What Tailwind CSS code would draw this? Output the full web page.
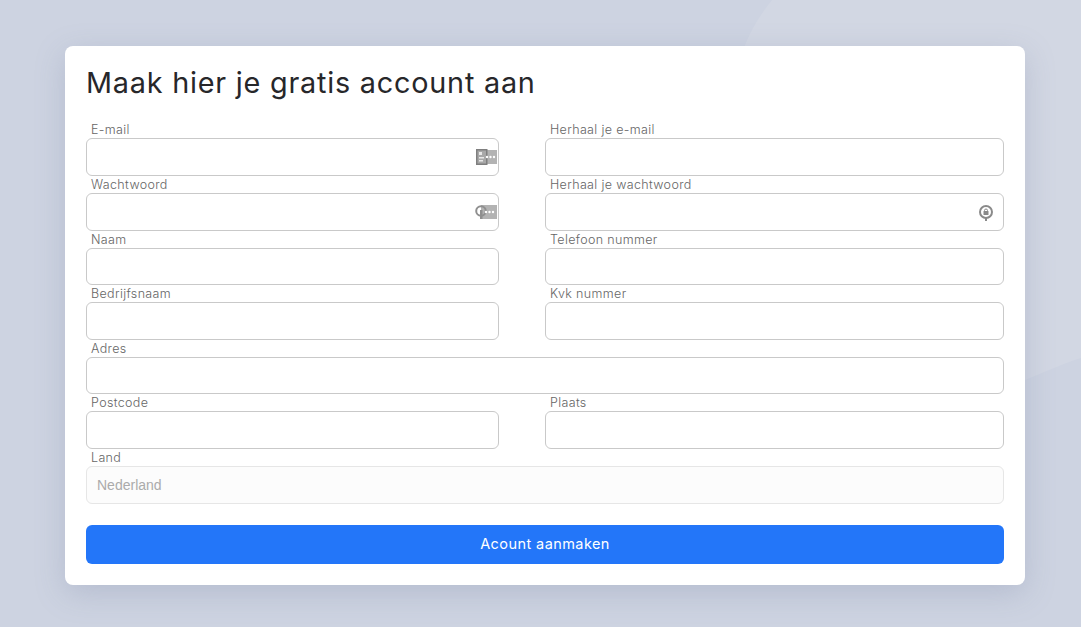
<!DOCTYPE html>
<html lang="nl">
<head>
<meta charset="UTF-8"/>
<title>Account aanmaken</title>
<script src="https://cdn.jsdelivr.net/npm/@tailwindcss/browser@4"></script>
</head>
<body class="relative h-[627px] overflow-hidden bg-[#cdd3e1] font-['Inter',sans-serif]">

<!-- background shape -->
<svg class="absolute inset-0" width="1081" height="627" viewBox="0 0 1081 627" fill="none">
  <path d="M772 0C758 18 750 32 744 48L1025 380C1045 372 1062 364 1081 358V0Z" fill="#d2d7e3"/>
</svg>

<main class="absolute left-[65px] top-[46px] w-[960px] h-[539px] bg-white rounded-[8px] shadow-[0_8px_30px_rgba(120,130,160,0.28)] px-[21px]">
  <h1 class="h-[74.8px] pt-[17px] text-[28.8px] leading-[40px] tracking-[0.78px] font-normal text-[#27272a]">Maak hier je gratis account aan</h1>

  <form class="grid grid-cols-[413px_459px] gap-x-[46px]">
    <div class="h-[54.6px]">
      <label class="block h-[17.6px] pl-[5px] pt-[1.55px] text-[12.5px] leading-[16px] tracking-[0.35px] font-light text-[#666666]">E-mail</label>
      <div class="relative h-[37.6px] rounded-[6px] border border-[#c9c9c9]">
        <svg class="absolute right-[1px] top-[10px]" width="21" height="16" viewBox="0 0 21 16">
          <rect x="4" y="1" width="17" height="14" fill="#b3b3b3"/>
          <rect x="0.75" y="0.75" width="10" height="14.5" fill="#a8a8a8" stroke="#7f7f7f" stroke-width="1.5"/>
          <rect x="3" y="3" width="3" height="3" fill="#e8e8e8"/>
          <rect x="3" y="8" width="5" height="1.5" fill="#e8e8e8"/>
          <rect x="3" y="11" width="4" height="1.5" fill="#e8e8e8"/>
          <circle cx="11" cy="8" r="1.2" fill="#fff"/><circle cx="14.5" cy="8" r="1.2" fill="#fff"/><circle cx="18" cy="8" r="1.2" fill="#fff"/>
        </svg>
      </div>
    </div>
    <div class="h-[54.6px]">
      <label class="block h-[17.6px] pl-[5px] pt-[1.55px] text-[12.5px] leading-[16px] tracking-[0.35px] font-light text-[#666666]">Herhaal je e-mail</label>
      <div class="h-[37.6px] rounded-[6px] border border-[#c9c9c9]"></div>
    </div>

    <div class="h-[54.6px]">
      <label class="block h-[17.6px] pl-[5px] pt-[1.55px] text-[12.5px] leading-[16px] tracking-[0.35px] font-light text-[#666666]">Wachtwoord</label>
      <div class="relative h-[37.6px] rounded-[6px] border border-[#c9c9c9]">
        <svg class="absolute right-[1px] top-[10px]" width="22" height="16" viewBox="0 0 22 16">
          <rect x="6" y="1" width="16" height="14" fill="#b3b3b3"/>
          <circle cx="6" cy="7" r="4.8" fill="none" stroke="#8f8f8f" stroke-width="2"/>
          <rect x="5" y="6" width="2.5" height="9" fill="#8f8f8f"/>
          <circle cx="11" cy="8" r="1.2" fill="#fff"/><circle cx="14.5" cy="8" r="1.2" fill="#fff"/><circle cx="18" cy="8" r="1.2" fill="#fff"/>
        </svg>
      </div>
    </div>
    <div class="h-[54.6px]">
      <label class="block h-[17.6px] pl-[5px] pt-[1.55px] text-[12.5px] leading-[16px] tracking-[0.35px] font-light text-[#666666]">Herhaal je wachtwoord</label>
      <div class="relative h-[37.6px] rounded-[6px] border border-[#c9c9c9]">
        <svg class="absolute right-[9px] top-[10px]" width="16" height="18" viewBox="0 0 16 18">
          <circle cx="8" cy="8" r="6" fill="none" stroke="#8a8a8a" stroke-width="2"/>
          <circle cx="8" cy="6.5" r="1.5" fill="none" stroke="#8a8a8a" stroke-width="1"/>
          <rect x="5.5" y="7" width="5" height="4" rx="0.5" fill="#8a8a8a"/>
          <rect x="7" y="13" width="2" height="4" fill="#8a8a8a"/>
        </svg>
      </div>
    </div>

    <div class="h-[54.6px]">
      <label class="block h-[17.6px] pl-[5px] pt-[1.55px] text-[12.5px] leading-[16px] tracking-[0.35px] font-light text-[#666666]">Naam</label>
      <div class="h-[37.6px] rounded-[6px] border border-[#c9c9c9]"></div>
    </div>
    <div class="h-[54.6px]">
      <label class="block h-[17.6px] pl-[5px] pt-[1.55px] text-[12.5px] leading-[16px] tracking-[0.35px] font-light text-[#666666]">Telefoon nummer</label>
      <div class="h-[37.6px] rounded-[6px] border border-[#c9c9c9]"></div>
    </div>

    <div class="h-[54.6px]">
      <label class="block h-[17.6px] pl-[5px] pt-[1.55px] text-[12.5px] leading-[16px] tracking-[0.35px] font-light text-[#666666]">Bedrijfsnaam</label>
      <div class="h-[37.6px] rounded-[6px] border border-[#c9c9c9]"></div>
    </div>
    <div class="h-[54.6px]">
      <label class="block h-[17.6px] pl-[5px] pt-[1.55px] text-[12.5px] leading-[16px] tracking-[0.35px] font-light text-[#666666]">Kvk nummer</label>
      <div class="h-[37.6px] rounded-[6px] border border-[#c9c9c9]"></div>
    </div>

    <div class="col-span-2 h-[54.6px]">
      <label class="block h-[17.6px] pl-[5px] pt-[1.55px] text-[12.5px] leading-[16px] tracking-[0.35px] font-light text-[#666666]">Adres</label>
      <div class="h-[37.6px] rounded-[6px] border border-[#c9c9c9]"></div>
    </div>

    <div class="h-[54.6px]">
      <label class="block h-[17.6px] pl-[5px] pt-[1.55px] text-[12.5px] leading-[16px] tracking-[0.35px] font-light text-[#666666]">Postcode</label>
      <div class="h-[37.6px] rounded-[6px] border border-[#c9c9c9]"></div>
    </div>
    <div class="h-[54.6px]">
      <label class="block h-[17.6px] pl-[5px] pt-[1.55px] text-[12.5px] leading-[16px] tracking-[0.35px] font-light text-[#666666]">Plaats</label>
      <div class="h-[37.6px] rounded-[6px] border border-[#c9c9c9]"></div>
    </div>

    <div class="col-span-2 h-[54.6px]">
      <label class="block h-[17.6px] pl-[5px] pt-[1.55px] text-[12.5px] leading-[16px] tracking-[0.35px] font-light text-[#666666]">Land</label>
      <div class="flex items-center h-[37.6px] pl-[10px] pt-[1px] rounded-[6px] border border-[#e6e6e6] bg-[#fcfcfc] text-[14px] text-[#ababab] font-['Liberation_Sans',sans-serif]">Nederland</div>
    </div>
  </form>

  <button class="block w-full h-[39px] mt-[22px] pb-[2px] rounded-[6px] bg-[#2376f9] text-white text-[14.5px] leading-[37px] tracking-[0.43px] font-normal">Acount aanmaken</button>
</main>
</body>
</html>
